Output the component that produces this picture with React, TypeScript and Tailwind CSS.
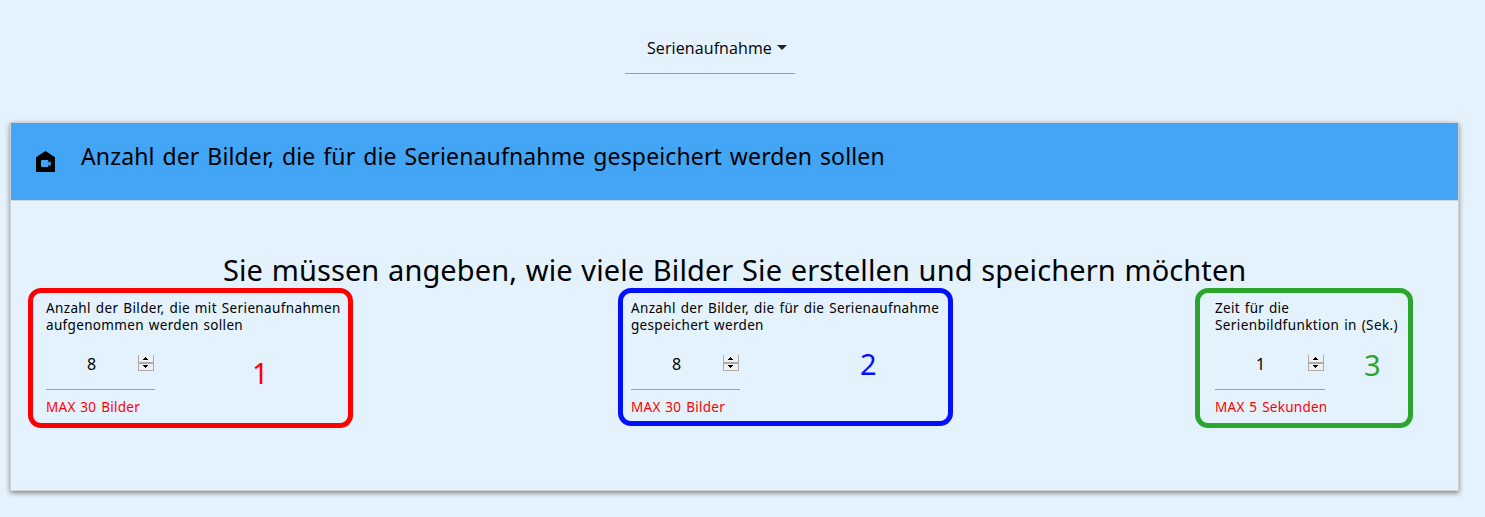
import type { ReactNode } from 'react';

function Spinner() {
  return (
    <svg width="16" height="16" viewBox="0 0 16 16" shapeRendering="crispEdges" className="block">
      <rect width="16" height="16" fill="#acacac" />
      <rect x="1" y="0" width="14" height="7" fill="#f0f0f0" />
      <rect x="1" y="9" width="14" height="6" fill="#f0f0f0" />
      <path d="M7 2h1v1h1v1h1v1H5V4h1V3h1zM5 10h5v1H9v1H8v1H7v-1H6v-1H5z" fill="#000" />
    </svg>
  );
}

interface FieldProps {
  lines: string[];
  value: string;
  max: string;
  box: string;
  labelSpacing: string[];
  inputWidth: string;
  children: ReactNode;
}

function Field({ lines, value, max, box, labelSpacing, inputWidth, children }: FieldProps) {
  return (
    <section className={`flex shrink-0 rounded-[13px] border-5 ${box}`}>
      <div className="w-[110px] shrink-0 whitespace-nowrap pt-[7px] [word-spacing:1px]">
        <label className="block text-[13.5px] leading-[17px]">
          {lines.map((line, i) => (
            <span key={line} className={`block ${labelSpacing[i]}`}>{line}</span>
          ))}
        </label>
        <div className={`mt-[14px] flex h-[42px] justify-between border-b border-[#9aa0a4] pr-px pt-[7px] ${inputWidth}`}>
          <span className="w-[91px] text-center text-base leading-[18px]">{value}</span>
          <Spinner />
        </div>
        <p className="mt-[8px] text-[13.5px] leading-[18px] tracking-[0.27px] text-[#ff0000]">{max}</p>
      </div>
      {children}
    </section>
  );
}

export default function App() {
  return (
    <main className="flex h-[517px] w-[1485px] flex-col overflow-hidden bg-[#e3f2fd] font-['Noto_Sans','Open_Sans',sans-serif] text-black">
      <div className="ml-[625px] mt-[30px] flex h-[44px] w-[170px] border-b border-[#9b9fa3] pl-[22px] pt-[6px]">
        <span className="whitespace-nowrap font-['Open_Sans',sans-serif] text-base leading-6 tracking-[0.1px]">Serienaufnahme</span>
        <svg width="10" height="5" viewBox="0 0 10 5" className="ml-[5px] mt-[9px]">
          <path d="M0 0h10L5 5z" fill="#212529" />
        </svg>
      </div>
      <div className="ml-[10px] mt-[48px] flex h-[369px] w-[1449px] flex-col border border-[#d3d3d3] shadow-[0_2px_5px_rgba(0,0,0,0.45)]">
        <header className="flex h-[78px] shrink-0 border-b border-[#d3d3d3] bg-[#42a5f5] pl-[25px]">
          <svg width="19" height="21" viewBox="0 0 19 21" className="mt-[28px]">
            <path d="M9.5 0L19 6.2V21H0V6.2z" fill="#000" />
            <path d="M6 9h5.5q1 0 1 1v1.7l2.2-1.7v5.2l-2.2-1.7V15q0 1-1 1H6q-1 0-1-1v-5q0-1 1-1z" fill="#42a5f5" />
          </svg>
          <h1 className="ml-[26px] mt-[15px] whitespace-nowrap text-[23px] leading-9 tracking-[0.14px] [word-spacing:1.7px]">
            Anzahl der Bilder, die für die Serienaufnahme gespeichert werden sollen
          </h1>
        </header>
        <h2 className="ml-[212px] mt-[49px] h-[38px] whitespace-nowrap text-[29px] leading-[40px] tracking-[0.1px] [word-spacing:1px]">
          Sie müssen angeben, wie viele Bilder Sie erstellen und speichern möchten
        </h2>
        <div className="flex items-start pl-[17px]">
          <Field
            lines={['Anzahl der Bilder, die mit Serienaufnahmen', 'aufgenommen werden sollen']}
            labelSpacing={['tracking-[0.37px]', 'tracking-[0.34px]']}
            inputWidth="w-[109px]"
            value="8"
            max="MAX 30 Bilder"
            box="h-[140px] w-[325px] border-[#ff0000] pl-[13px]"
          >
            <span className="ml-[96px] mt-[60px] text-[29px] leading-[40px] text-[#ff0000]">1</span>
          </Field>
          <Field
            lines={['Anzahl der Bilder, die für die Serienaufnahme', 'gespeichert werden']}
            labelSpacing={['tracking-[0.35px]', 'tracking-[0.32px]']}
            inputWidth="w-[109px]"
            value="8"
            max="MAX 30 Bilder"
            box="ml-[265px] h-[138px] w-[335px] border-[#0010ff] pl-[8px]"
          >
            <span className="ml-[119px] mt-[51px] text-[29px] leading-[40px] text-[#0010ff]">2</span>
          </Field>
          <Field
            lines={['Zeit für die', 'Serienbildfunktion in (Sek.)']}
            labelSpacing={['tracking-[0.3px]', 'tracking-[0.4px]']}
            inputWidth="w-[110px]"
            value="1"
            max="MAX 5 Sekunden"
            box="ml-[242px] h-[140px] w-[218px] border-[#2ca52c] pl-[15px]"
          >
            <span className="ml-[39px] mt-[52px] text-[29px] leading-[40px] text-[#2ca52c]">3</span>
          </Field>
        </div>
      </div>
    </main>
  );
}
